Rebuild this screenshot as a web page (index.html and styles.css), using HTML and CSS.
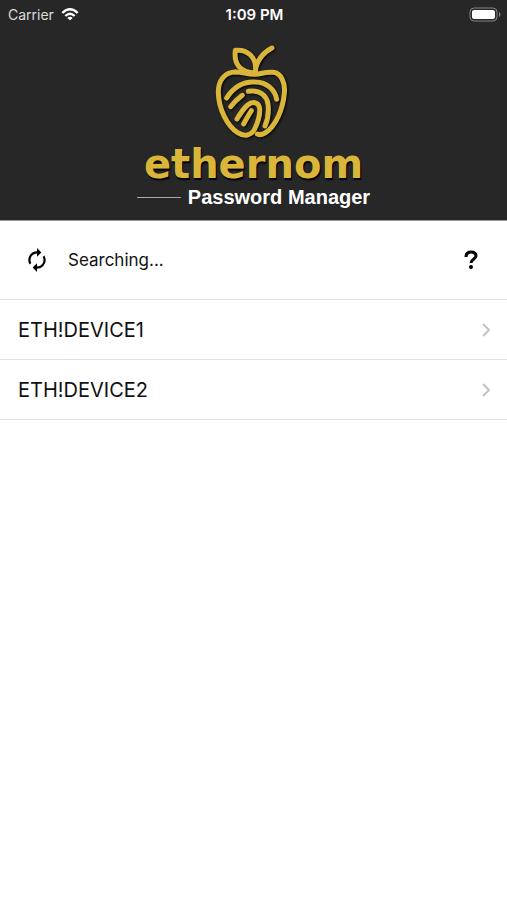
FILE: index.html
```
<!DOCTYPE html>
<html lang="en">
<head>
  <meta charset="UTF-8">
  <meta name="viewport" content="width=device-width, initial-scale=1.0">
  <title>Ethernom Password Manager</title>
  <link rel="stylesheet" href="styles.css">
</head>
<body>
  <header class="header">
    <div class="status-bar">
      <div class="carrier">
        <span>Carrier</span>
        <svg class="wifi" viewBox="0 0 54 39" fill="none" stroke="#fff" stroke-width="7">
          <path d="M4 15Q27-7 50 15M13 24Q27 11 41 24"/>
          <path d="M27 37l-8-7q8-7 16 0z" fill="#fff" stroke="none"/>
        </svg>
      </div>
      <span class="time">1:09 PM</span>
      <svg class="battery" viewBox="0 0 32 15">
        <rect x="1" y="1" width="27" height="13" rx="4" fill="none" stroke="#858585"/>
        <rect x="3" y="3" width="23" height="9" rx="2" fill="#fff"/>
        <path d="M30 5q3 2.500 0 5z" fill="#858585"/>
      </svg>
    </div>

    <div class="brand">
      <svg class="apple" viewBox="0 0 291 315" fill="none" stroke-width="15" stroke-linecap="round" stroke-linejoin="round">
        <g stroke="#d9b63a">
          <!-- leaf and stem -->
          <path d="M151 99C105 98 86 72 91 31C123 27 158 48 151 99C150 70 171 39 201 24"/>
          <!-- body -->
          <path d="M92 96C58 96 39 123 40 158C41 207 66 257 98 278C118 291 139 287 149 267C158 248 166 226 164 205C161 184 141 184 128 195C114 207 105 222 96 237"/>
          <path d="M92 96C116 96 124 104 151 103C171 102 180 94 205 97C230 100 241 130 238 160C234 207 213 257 182 278C172 285 164 285 157 282"/>
          <!-- fingerprint -->
          <path d="M65 174C85 142 113 124 151 126C186 127 210 149 215 178"/>
          <path d="M77 200C87 187 95 179 112 166"/>
          <path d="M130 154C163 150 184 164 189 192C192 216 189 237 180 258"/>
          <path d="M139 212C132 224 124 237 116 252"/>
        </g>
      </svg>
      <h1 class="wordmark">ethernom</h1>
      <p class="tagline">Password Manager</p>
    </div>
  </header>

  <main>
    <div class="search">
      <button class="icon-btn" type="button" aria-label="Refresh">
        <svg class="refresh" viewBox="0 0 24 24" fill="#000">
          <path d="M12 6v3l4-4-4-4v3c-4.420 0-8 3.580-8 8 0 1.570.46 3.030 1.240 4.260L6.700 14.800C6.250 13.970 6 13.010 6 12c0-3.310 2.690-6 6-6zm6.760 1.740L17.300 9.200c.44.84.7 1.790.7 2.800 0 3.310-2.690 6-6 6v-3l-4 4 4 4v-3c4.420 0 8-3.580 8-8 0-1.570-.46-3.030-1.240-4.260z"/>
        </svg>
      </button>
      <span class="search-text">Searching...</span>
      <button class="icon-btn" type="button" aria-label="Help">
        <svg class="help" viewBox="0 0 14 20">
          <path d="M2 7Q2 2 7 2Q12 2 12 6C12 9 7 9 7 13" fill="none" stroke="#000" stroke-width="3"/>
          <circle cx="7" cy="17" r="2" fill="#000"/>
        </svg>
      </button>
    </div>

    <ul class="devices">
      <li>
        <a href="#">
          <span>ETH!DEVICE1</span>
          <svg class="arrow" viewBox="0 0 8 14"><path d="M1 1l6 6-6 6"/></svg>
        </a>
      </li>
      <li>
        <a href="#">
          <span>ETH!DEVICE2</span>
          <svg class="arrow" viewBox="0 0 8 14"><path d="M1 1l6 6-6 6"/></svg>
        </a>
      </li>
    </ul>
  </main>
</body>
</html>
```
FILE: styles.css
```
* {
  box-sizing: border-box;
  margin: 0;
  padding: 0;
}
body {
  background: #fff;
  color: #111;
  font-family: Inter, "Liberation Sans", sans-serif;
}
svg {
  display: block;
  flex: none;
}

/* header */
.header {
  background: #272727;
  color: #fff;
  padding-bottom: 12px;
  border-bottom: 1px solid #999;
}
.status-bar {
  display: grid;
  grid-template-columns: 1fr auto 1fr;
  align-items: center;
  height: 28px;
  padding: 0 6px 0 8px;
  font-size: 14px;
}
.carrier {
  display: flex;
  align-items: center;
  gap: 7px;
  color: #ddd;
}
.wifi {
  width: 18px;
  height: 13px;
}
.time {
  font-size: 15px;
  font-weight: 600;
}
.battery {
  width: 32px;
  height: 15px;
  justify-self: end;
}
.brand {
  display: flex;
  flex-direction: column;
  align-items: center;
  padding-top: 12px;
}
.apple {
  width: 97px;
  height: 105px;
  filter: drop-shadow(1px 1px 1px #000);
}
.wordmark {
  color: #d9b63a;
  font-family: "DejaVu Sans", sans-serif;
  font-size: 40px;
  font-weight: 700;
  line-height: 38px;
  text-shadow: 1px 2px 1px #000;
}
.tagline {
  display: flex;
  align-items: center;
  gap: 7px;
  margin-top: 3px;
  font-family: "Liberation Sans", Arial, sans-serif;
  font-size: 20px;
  font-weight: 700;
  line-height: 22px;
}
.tagline::before {
  content: "";
  width: 44px;
  height: 1px;
  background: #aaa;
}

/* search row */
.search {
  display: flex;
  align-items: center;
  height: 79px;
  padding: 0 29px 0 24px;
  border-bottom: 1px solid #e2e2e2;
}
.icon-btn {
  background: none;
  border: none;
  cursor: pointer;
}
.refresh {
  width: 26px;
  height: 26px;
}
.search-text {
  flex: 1;
  margin-left: 18px;
  font-size: 17px;
}
.help {
  width: 14px;
  height: 20px;
}

/* device list */
.devices {
  list-style: none;
}
.devices a {
  display: flex;
  align-items: center;
  justify-content: space-between;
  height: 60px;
  padding: 0 17px 0 18px;
  border-bottom: 1px solid #e2e2e2;
  color: #111;
  font-size: 20px;
  text-decoration: none;
}
.arrow {
  width: 8px;
  height: 14px;
  fill: none;
  stroke: #c4c4c6;
  stroke-width: 2;
}
```
